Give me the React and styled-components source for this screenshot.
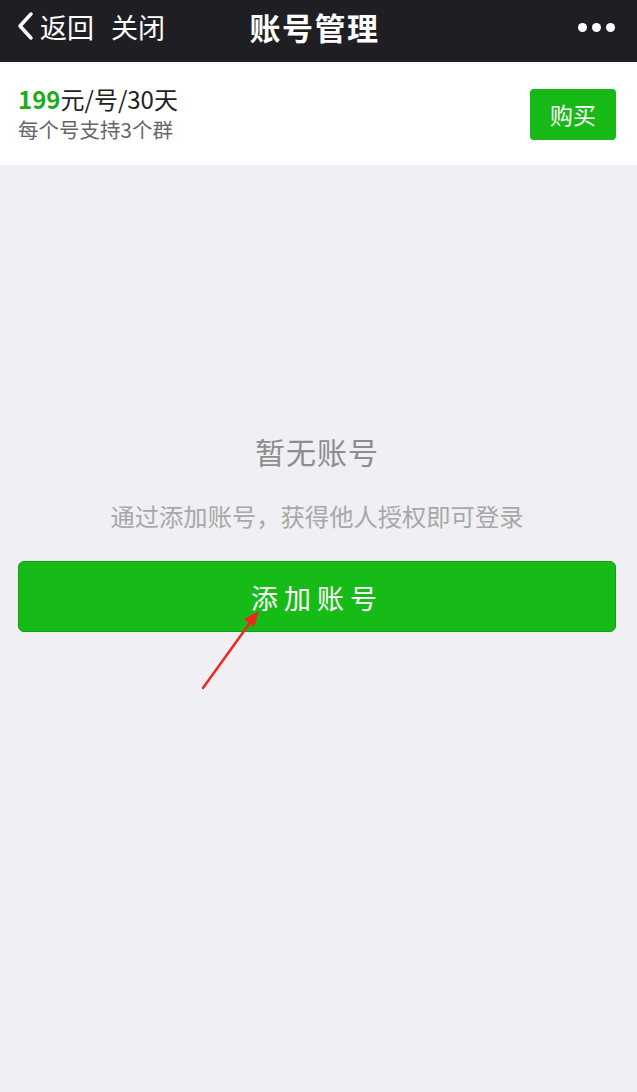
import React from "react";
import styled, { createGlobalStyle } from "styled-components";

const Global = createGlobalStyle`
  html, body { margin: 0; padding: 0; background: #efeff4; }
  body { font-family: "Noto Sans CJK SC", "Noto Sans", sans-serif; }
  * { box-sizing: border-box; }
`;

const Page = styled.div`
  position: relative;
  width: 637px;
  min-height: 1092px;
  background: #efeff4;
`;

const NavBar = styled.header`
  height: 62px;
  background: #1f1f23;
  display: grid;
  grid-template-columns: 1fr auto 1fr;
  align-items: center;
  padding: 0 22px 10px 14px;
  color: #fff;
`;

const NavLeft = styled.div`
  display: flex;
  align-items: center;
  gap: 17px;
`;

const NavLink = styled.span`
  display: flex;
  align-items: center;
  font-size: 27px;
  line-height: 1;
`;

const Title = styled.h1`
  margin: 0;
  font-size: 31px;
  font-weight: 700;
  letter-spacing: 1.5px;
  line-height: 1;
`;

const Dots = styled.div`
  justify-self: end;
  display: flex;
  gap: 5px;
  padding-top: 2px;
`;

const Dot = styled.span`
  width: 9px;
  height: 9px;
  border-radius: 50%;
  background: #fff;
`;

const InfoBar = styled.section`
  height: 103px;
  background: #fff;
  display: flex;
  align-items: center;
  justify-content: space-between;
  padding: 0 21px 0 18px;
`;

const PriceBlock = styled.div`
  display: flex;
  flex-direction: column;
  gap: 6px;
  margin-top: -1px;
`;

const Price = styled.div`
  font-size: 24px;
  color: #222;
  line-height: 26px;
`;

const PriceNum = styled.span`
  color: #1aad19;
  font-weight: 700;
`;

const Note = styled.div`
  font-size: 20.5px;
  color: #666;
  line-height: 22px;
`;

const BuyButton = styled.button`
  width: 86px;
  height: 51px;
  border: none;
  border-radius: 4px;
  background: #17b917;
  color: #fff;
  font-family: inherit;
  font-size: 23px;
  margin-top: 1px;
`;

const Empty = styled.section`
  display: flex;
  flex-direction: column;
  align-items: center;
  padding: 271px 21px 0 18px;
`;

const EmptyTitle = styled.div`
  font-size: 30px;
  color: #8d8d8d;
  line-height: 1;
  letter-spacing: 1px;
`;

const EmptyText = styled.div`
  margin-top: 38px;
  font-size: 24.3px;
  color: #a8a8a8;
  line-height: 1;
`;

const AddButton = styled.button`
  margin-top: 33px;
  width: 100%;
  height: 71px;
  border: 1px solid #12a012;
  border-radius: 6px;
  background: #17bb17;
  color: #fff;
  font-family: inherit;
  font-size: 27px;
  letter-spacing: 6px;
  padding-left: 6px;
  padding-top: 2px;
`;

const Arrow = styled.svg`
  position: absolute;
  left: 195px;
  top: 605px;
  width: 75px;
  height: 90px;
  pointer-events: none;
`;

export default function App() {
  return (
    <Page>
      <Global />
      <NavBar>
        <NavLeft>
          <NavLink>
            <svg width="22" height="30" viewBox="0 0 22 30" style={{ marginRight: 4 }}>
              <path d="M17 3 L6 15 L17 27" fill="none" stroke="#fff" strokeWidth="3.5" strokeLinecap="round" strokeLinejoin="round" />
            </svg>
            返回
          </NavLink>
          <NavLink>关闭</NavLink>
        </NavLeft>
        <Title>账号管理</Title>
        <Dots>
          <Dot />
          <Dot />
          <Dot />
        </Dots>
      </NavBar>
      <InfoBar>
        <PriceBlock>
          <Price>
            <PriceNum>199</PriceNum>元/号/30天
          </Price>
          <Note>每个号支持3个群</Note>
        </PriceBlock>
        <BuyButton>购买</BuyButton>
      </InfoBar>
      <Empty>
        <EmptyTitle>暂无账号</EmptyTitle>
        <EmptyText>通过添加账号，获得他人授权即可登录</EmptyText>
        <AddButton>添加账号</AddButton>
      </Empty>
      <Arrow viewBox="0 0 75 90">
        <line x1="8" y1="83" x2="57" y2="15" stroke="#f0271e" strokeWidth="2.5" strokeLinecap="round" />
        <polygon points="64,6 49,14 59,22" fill="#f0271e" />
      </Arrow>
    </Page>
  );
}
